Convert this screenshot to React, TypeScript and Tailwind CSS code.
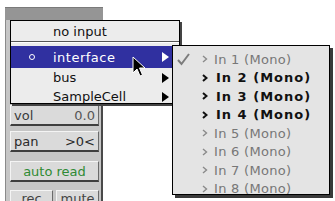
const font = "font-['DejaVu_Sans',sans-serif]";

const subItems = [
  { label: "In 1 (Mono)", bold: false, checked: true },
  { label: "In 2 (Mono)", bold: true },
  { label: "In 3 (Mono)", bold: true },
  { label: "In 4 (Mono)", bold: true },
  { label: "In 5 (Mono)", bold: false },
  { label: "In 6 (Mono)", bold: false },
  { label: "In 7 (Mono)", bold: false },
  { label: "In 8 (Mono)", bold: false },
];

const Tri = ({ white }: { white?: boolean }) => (
  <svg width="7" height="10" viewBox="0 0 7 10" className="shrink-0">
    <polygon points="0,0 7,5 0,10" fill={white ? "#ffffff" : "#000000"} />
  </svg>
);

const Chevron = ({ dark }: { dark?: boolean }) => (
  <svg width="6" height="8" viewBox="0 0 6 8" className="shrink-0">
    <polyline
      points="1,1 4.5,4 1,7"
      fill="none"
      stroke={dark ? "#111111" : "#8a8a8a"}
      strokeWidth={dark ? 2 : 1.4}
    />
  </svg>
);

const StripButton = ({ children, className = "" }: { children: React.ReactNode; className?: string }) => (
  <div
    className={`h-[21px] flex items-center px-[3px] bg-[#dadada] border-t border-l border-t-[#f4f4f4] border-l-[#f4f4f4] border-r border-r-[#6a6a6a] border-b-2 border-b-[#3e3e3e] text-[13px] leading-none ${className}`}
  >
    {children}
  </div>
);

export default function App() {
  return (
    <div className={`relative w-[335px] h-[201px] bg-white overflow-hidden ${font}`}>
      {/* mixer strip behind the menu */}
      <div className="ml-[5px] mt-[7px] w-[98px] flex flex-col">
        <div className="h-[13px] bg-[#959595] border-t border-[#7a7a7a]" />
        <div className="flex flex-col bg-[#c6c6c6] border-l border-[#8a8a8a] border-r-2 border-r-[#4a4a4a] pl-[4px] pr-[2px] pb-[10px]">
          <div className="h-[85px]" />
          <StripButton className="justify-between text-[#3a3a3a]">
            <span>vol</span>
            <span className="text-[#555]">0.0</span>
          </StripButton>
          <StripButton className="justify-between text-[#2a2a2a] mt-[5px]">
            <span>pan</span>
            <span>&gt;0&lt;</span>
          </StripButton>
          <StripButton className="justify-center text-[#2f8a34] bg-[#d3dbd3] mt-[9px]">
            <span>auto read</span>
          </StripButton>
          <div className="flex gap-[3px] mt-[8px]">
            <StripButton className="flex-1 justify-center text-[#444] items-start pt-[1px]">
              <span>rec</span>
            </StripButton>
            <StripButton className="flex-1 justify-center text-[#444] items-start pt-[1px]">
              <span>mute</span>
            </StripButton>
          </div>
        </div>
      </div>

      {/* main popup menu */}
      <div className="absolute left-[10px] top-[20px] w-[170px] h-[84px] bg-[#ececec] border border-black shadow-[2px_2px_0_#444] overflow-hidden text-[13px] leading-none">
        <div className="h-[20px] flex items-center pl-[42px] text-[#111]">no input</div>
        <div className="h-px bg-[#555]" />
        <div className="h-px bg-white" />
        <div className="mt-[3px] h-[22px] flex items-center bg-[#3030a0] text-white">
          <span className="w-[29px] flex justify-end pr-[5px]">
            <span className="w-[6px] h-[6px] rounded-full border-[1.5px] border-white" />
          </span>
          <span className="ml-[13px] tracking-[0.5px] flex-1">interface</span>
          <span className="pr-[10px]">
            <Tri white />
          </span>
        </div>
        <div className="h-[19px] flex items-center pl-[42px] text-[#111]">
          <span className="flex-1">bus</span>
          <span className="pr-[10px]">
            <Tri />
          </span>
        </div>
        <div className="h-[19px] flex items-center pl-[42px] text-[#111]">
          <span className="flex-1">SampleCell</span>
          <span className="pr-[10px]">
            <Tri />
          </span>
        </div>
      </div>

      {/* submenu */}
      <div className="absolute left-[172px] top-[45px] w-[158px] h-[150px] bg-[#e4e4e4] border border-black shadow-[3px_3px_0_#3a3a3a] pt-[4px] text-[13px] leading-none">
        {subItems.map((it) => (
          <div key={it.label} className="h-[18.5px] flex items-center">
            <span className="w-[29px] pl-[4px] flex items-center">
              {it.checked && (
                <svg width="13" height="13" viewBox="0 0 13 13">
                  <polyline points="1,7 4.5,11 12,1" fill="none" stroke="#7c7c7c" strokeWidth="2" />
                </svg>
              )}
            </span>
            <Chevron dark={it.bold} />
            {it.bold ? (
              <span className="ml-[8px] font-bold tracking-[1px] text-[#111]">{it.label}</span>
            ) : (
              <span className="ml-[6px] tracking-[0.3px] text-[#777]">{it.label}</span>
            )}
          </div>
        ))}
      </div>

      {/* cursor */}
      <svg className="absolute left-[132px] top-[56px]" width="14" height="22" viewBox="0 0 14 22">
        <path d="M1 1 L1 17 L5 13 L8 20 L10.5 19 L7.5 12 L13 12 Z" fill="#000" stroke="#fff" strokeWidth="1" />
      </svg>
    </div>
  );
}
